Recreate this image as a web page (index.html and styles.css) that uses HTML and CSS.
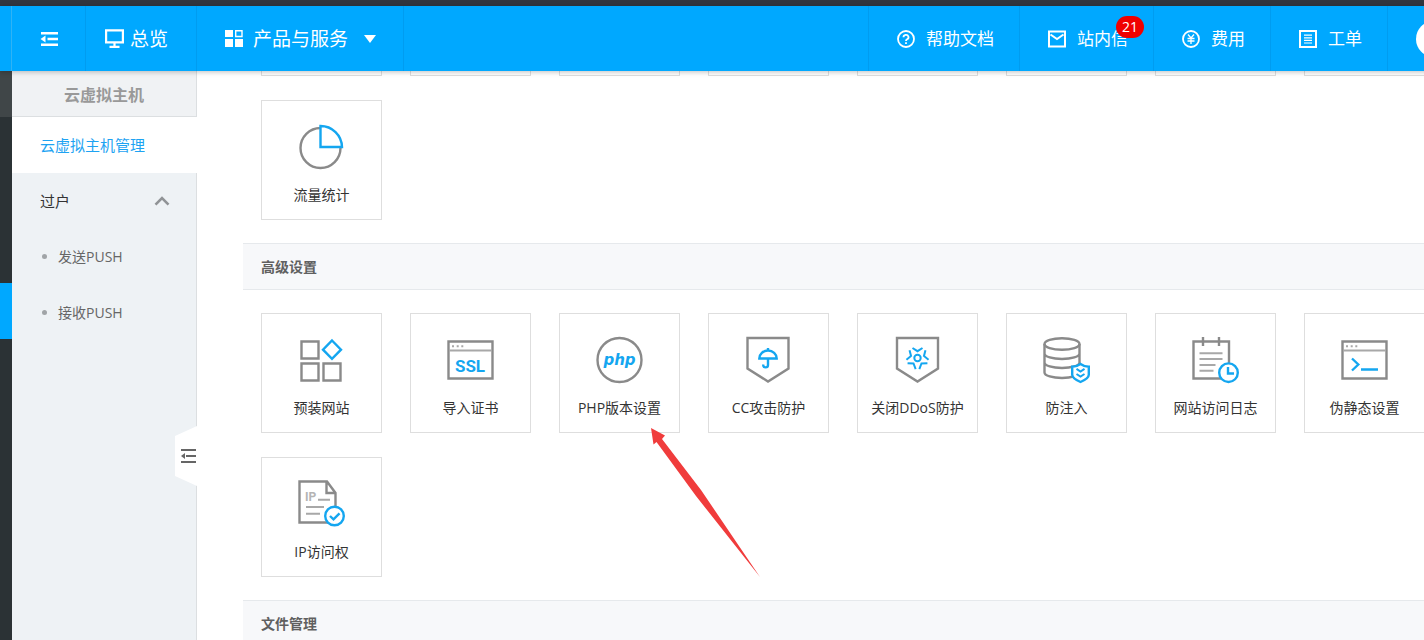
FILE: index.html
```html
<!DOCTYPE html>
<html lang="zh-CN">
<head>
<meta charset="utf-8">
<title>云虚拟主机管理</title>
<link rel="stylesheet" href="styles.css">
</head>
<body>
<div class="page">
  <div class="strip"></div>
  <header class="topbar">
    <div class="topbar-edge"></div>
    <button class="nav-item nav-toggle" type="button" aria-label="收起菜单">
      <svg width="18" height="14" viewBox="0 0 18 14" fill="none" stroke="currentColor" stroke-width="2.400"><path d="M1 1.200h17M7.500 7h10.500M1 12.800h17"/><path d="M5.500 3.500v7L0.500 7z" fill="currentColor" stroke="none"/></svg>
    </button>
    <a class="nav-item nav-home" href="#">
      <svg width="19" height="19" viewBox="0 0 19 19" fill="none" stroke="currentColor" stroke-width="2.200"><path d="M1.100 1.300h16.800v12H1.100zM9.500 14v4M4.500 17.800h10"/></svg>
      <span>总览</span>
    </a>
    <button class="nav-item nav-products" type="button">
      <svg width="18" height="17" viewBox="0 0 18 17" fill="currentColor"><path d="M0 0h8v7H0zM0 9h8v8H0zM10 9h8v8h-8z"/><path d="M10.700.700h6.300v5.800h-6.300z" fill="none" stroke="currentColor" stroke-width="1.400"/></svg>
      <span>产品与服务</span>
      <svg class="caret" width="12" height="8" viewBox="0 0 12 8" fill="currentColor"><path d="M0 0h12L6 8z"/></svg>
    </button>
    <nav class="topbar-right" aria-label="工具">
      <a class="tool" href="#">
        <svg width="18" height="18" viewBox="0 0 18 18" fill="none" stroke="currentColor" stroke-width="1.800"><circle cx="9" cy="9" r="8"/><path d="M6.500 7.200a2.500 2.300 0 1 1 3.600 2q-1.100.600-1.100 1.900M9 12.300v1.700"/></svg>
        <span>帮助文档</span>
      </a>
      <a class="tool" href="#">
        <svg width="18" height="18" viewBox="0 0 18 18" fill="none" stroke="currentColor" stroke-width="2"><path d="M1 1.500h16v15H1z"/><path d="M2.500 4.500l6.500 4.500 6.500-4.500"/></svg>
        <span>站内信</span>
        <span class="badge">21</span>
      </a>
      <a class="tool" href="#">
        <svg width="18" height="18" viewBox="0 0 18 18" fill="none" stroke="currentColor" stroke-width="1.800"><circle cx="9" cy="9" r="8"/><path d="M6 4.500l3 3.500 3-3.500M9 8v6M5.500 8.500h7M5.500 11h7" stroke-width="1.300"/></svg>
        <span>费用</span>
      </a>
      <a class="tool" href="#">
        <svg width="18" height="18" viewBox="0 0 18 18" fill="none" stroke="currentColor" stroke-width="2"><path d="M1 1h16v16H1z"/><path d="M5 5.200h8M5 7.800h8M5 10.400h8M5 13h8" stroke-width="1.200"/></svg>
        <span>工单</span>
      </a>
      <a class="account" href="#" aria-label="账号"><span class="avatar"></span></a>
    </nav>
  </header>

  <div class="layout">
    <div class="rail"><div class="rail-head"></div><div class="rail-gap"></div><div class="rail-active"></div></div>

    <aside class="sidebar">
      <h1 class="side-title">云虚拟主机</h1>
      <a class="side-item side-current" href="#">云虚拟主机管理</a>
      <button class="side-item side-group" type="button">过户
        <svg width="16" height="10" viewBox="0 0 16 10" fill="none" stroke="currentColor" stroke-width="2.600"><path d="M1.500 8.700L8 2l6.500 6.700"/></svg>
      </button>
      <a class="side-item side-sub" href="#">发送PUSH</a>
      <a class="side-item side-sub" href="#">接收PUSH</a>
      <button class="collapse" type="button" aria-label="收起侧栏">
        <svg width="15" height="14" viewBox="0 0 15 14" fill="none" stroke="currentColor" stroke-width="2"><path d="M0 1h15M5 7h10M0 13h15"/><path d="M4 4v6L0 7z" fill="currentColor" stroke="none"/></svg>
      </button>
    </aside>

    <main class="content">
      <div class="tiles peek"><i></i><i></i><i></i><i></i><i></i><i></i><i></i><i></i></div>
      <div class="tiles">
        <a class="tile" href="#">
          <svg class="icon" viewBox="0 0 49 48"><circle cx="23.500" cy="25" r="20"/><path class="blue paper" d="M23.500 3A21.500 21.500 0 0 1 45 24H23.500z"/></svg>
          <span>流量统计</span>
        </a>
      </div>

      <h2 class="section">高级设置</h2>
      <div class="tiles">
        <a class="tile" href="#">
          <svg class="icon" viewBox="0 0 49 48"><path d="M4.500 5.500h17v17h-17zM4.500 27.500h17v17h-17zM26.500 27.500h17v17h-17z"/><path class="blue" d="M35 4.500l9 9.200-9 9.200-9-9.200z"/></svg>
          <span>预装网站</span>
        </a>
        <a class="tile" href="#">
          <svg class="icon" viewBox="0 0 49 48"><path d="M2.500 5.500h44v37h-44z"/><path class="thin" d="M3 14.500h43"/><path class="thin" d="M6 10.300h2M10.700 10.300h2M15.300 10.300h2"/><text class="ssl" x="24" y="36">SSL</text></svg>
          <span>导入证书</span>
        </a>
        <a class="tile" href="#">
          <svg class="icon" viewBox="0 0 49 48"><circle cx="24.500" cy="24" r="22"/><text class="php" x="24.500" y="29">php</text></svg>
          <span>PHP版本设置</span>
        </a>
        <a class="tile" href="#">
          <svg class="icon" viewBox="0 0 49 48"><path d="M3.500 2h41v30.500L24 45.500 3.500 32.500z"/><path class="blue" d="M15.300 22.500a8.700 8 0 0 1 17.400 0zM24 12v3M24 22.500v6.500a2.400 2.400 0 0 1-4.800 0v-.500"/></svg>
          <span>CC攻击防护</span>
        </a>
        <a class="tile" href="#">
          <svg class="icon" viewBox="0 0 49 48"><path d="M4 2h41v30.500L24.500 45.500 4 32.500z"/><g class="blue rays"><circle cx="24.500" cy="22" r="3.200"/><path id="ray" d="M19.500 12l5 3.200 5-3.200"/><use href="#ray" transform="rotate(72 24.500 22)"/><use href="#ray" transform="rotate(144 24.500 22)"/><use href="#ray" transform="rotate(216 24.500 22)"/><use href="#ray" transform="rotate(288 24.500 22)"/></g></svg>
          <span>关闭DDoS防护</span>
        </a>
        <a class="tile" href="#">
          <svg class="icon" viewBox="0 0 49 48"><ellipse cx="20" cy="8" rx="17.500" ry="5.800"/><path d="M2.500 8v28.500c0 3.200 8 5.500 17.500 5.500s17.500-2.300 17.500-5.500V8M2.500 17.500c0 3.200 8 5.500 17.500 5.500s17.500-2.300 17.500-5.500M2.500 26.500c0 3.200 8 5.500 17.500 5.500s17.500-2.300 17.500-5.500"/><path class="blue paper" d="M38.500 28q4 2.800 8.300 2.800v8q0 3.600-8.300 7.200-8.300-3.600-8.300-7.200v-8q4.300 0 8.300-2.800z"/><path class="blue rays" d="M34.500 32.800l4 2.700 4-2.700M34.500 38l4 2.500 4-2.500"/></svg>
          <span>防注入</span>
        </a>
        <a class="tile" href="#">
          <svg class="icon" viewBox="0 0 49 48"><path d="M2.500 5.500H38v37H2.500z"/><path d="M12 1v9M28 1v9"/><path class="thin" d="M8.500 17.300h23M8.500 23h23M8.500 29h16M8.500 34.700h14"/><circle class="blue paper" cx="37.500" cy="36.700" r="9.300"/><path class="blue" d="M37 31v6.500h6"/></svg>
          <span>网站访问日志</span>
        </a>
        <a class="tile" href="#">
          <svg class="icon" viewBox="0 0 49 48"><path d="M2.500 5.500h44v37h-44z"/><path class="thin" d="M3 14.500h43"/><path class="thin" d="M6 10.300h2M10.700 10.300h2M15.300 10.300h2"/><path class="blue" d="M12 22.500l6.300 6-6.300 6M21 33.500h17"/></svg>
          <span>伪静态设置</span>
        </a>
        <a class="tile" href="#">
          <svg class="icon" viewBox="0 0 49 48"><path d="M2.500 1.500H30L38.500 13v29.500h-36zM29.500 2v11H38"/><text class="ip" x="8" y="21">IP</text><path class="thin" d="M21 19.700h12M9 27h18M9 33.700h14"/><circle class="blue paper" cx="37.500" cy="36" r="9.300"/><path class="blue" d="M33 36l3.500 3.300 6-6"/></svg>
          <span>IP访问权</span>
        </a>
      </div>

      <h2 class="section">文件管理</h2>
    </main>
  </div>

  <svg class="pointer" width="110" height="150" viewBox="0 0 110 150" aria-hidden="true"><path d="M1 1L15 8.500 12 12 51 63 110 150 46 69 6.500 15 3.500 17.500z"/></svg>
</div>
</body>
</html>
```

FILE: styles.css
```css
* { box-sizing: border-box; }

body {
  margin: 0;
  overflow: hidden;
  background: #fff;
  color: #333;
  font: 14px/20px "Open Sans", "Noto Sans CJK SC", sans-serif;
}

a { color: inherit; text-decoration: none; }

button {
  padding: 0;
  border: 0;
  background: none;
  color: inherit;
  font: inherit;
  cursor: pointer;
}

svg { display: block; flex: none; }

.page {
  position: relative;
  display: flex;
  flex-direction: column;
  min-width: 1480px;
  height: 100vh;
  overflow: hidden;
}

.strip { flex: none; height: 6px; background: #32363f; }

/* Top bar */
.topbar {
  position: relative;
  z-index: 2;
  display: flex;
  flex: none;
  height: 65px;
  background: #00a8ff;
  color: #fff;
  box-shadow: 0 1px 5px rgba(0, 0, 0, .25);
}

.topbar-edge { width: 12px; border-right: 1px solid #2fb3f5; }

.nav-item {
  display: flex;
  align-items: center;
  border-right: 1px solid #009cf0;
  font-size: 19px;
  line-height: 28px;
}

.nav-toggle { justify-content: center; width: 74px; }
.nav-home { gap: 6px; padding: 0 28px 0 19px; }
.nav-products { gap: 10px; padding: 0 27px 0 28px; }
.caret { margin-left: 6px; }

.topbar-right {
  display: flex;
  margin-left: auto;
  border-left: 1px solid #009cf0;
}

.tool {
  position: relative;
  display: flex;
  align-items: center;
  gap: 11px;
  padding: 0 25px 0 28px;
  border-right: 1px solid #009cf0;
  font-size: 17px;
  line-height: 24px;
}

.badge {
  position: absolute;
  top: 10px;
  right: 9px;
  padding: 0 6px;
  border-radius: 11px;
  background: #f00000;
  font-size: 14px;
  line-height: 22px;
}

.account { display: flex; align-items: center; padding: 0 28px; }
.avatar { width: 36px; height: 36px; border-radius: 50%; background: #fff; }

/* Columns */
.layout { display: flex; flex: 1; min-height: 0; }

.rail { flex: none; width: 12px; background: #2b3235; }
.rail-head { height: 46px; background: #404648; }
.rail-gap { height: 166px; }
.rail-active { height: 56px; background: #00a8ff; }

.sidebar {
  position: relative;
  flex: none;
  width: 185px;
  border-right: 1px solid #dcdfe1;
  background: #eef2f5;
}

.side-title {
  margin: 0;
  border-bottom: 1px solid #dcdfe1;
  background: #f0f2f4;
  color: #999;
  font-size: 16px;
  line-height: 48px;
  height: 46px;
  text-align: center;
}

.side-item {
  display: flex;
  align-items: center;
  width: 100%;
  height: 56px;
  padding: 0 28px 1px;
  font-size: 15px;
}

.side-current { width: 185px; background: #fff; color: #1ea3f2; }
.side-group { justify-content: space-between; padding-right: 26px; }
.side-group svg { color: #909396; }
.side-sub { gap: 11px; padding-left: 30px; color: #666; font-size: 14px; }
.side-sub::before { content: ""; width: 5px; height: 5px; border-radius: 50%; background: #a0a4a7; }

.collapse {
  position: absolute;
  top: 355px;
  right: -1px;
  display: flex;
  align-items: center;
  justify-content: flex-end;
  width: 22px;
  height: 60px;
  padding-right: 1px;
  background: #fff;
  color: #666;
  clip-path: polygon(0 10px, 100% 0, 100% 100%, 0 50px);
}

/* Content */
.content { flex: 1; min-width: 0; padding-left: 46px; }

.tiles {
  display: grid;
  grid-template-columns: repeat(auto-fill, 121px);
  gap: 24px 28px;
  padding-left: 18px;
}

.peek { margin-bottom: 24px; }
.peek i { height: 5px; border: 1px solid #dedede; border-top: 0; }

.tile {
  display: flex;
  flex-direction: column;
  align-items: center;
  gap: 14px;
  height: 120px;
  padding-top: 22px;
  border: 1px solid #dedede;
  white-space: nowrap;
}

.section {
  margin: 23px 0;
  padding: 0 18px;
  border: 1px solid #e6e9ec;
  border-width: 1px 0;
  background: #f7f8fa;
  color: #606060;
  font-size: 14px;
  font-weight: 600;
  line-height: 45px;
}

/* Tile icons */
.icon { width: 49px; height: 48px; fill: none; stroke: #8a8a8a; stroke-width: 2.4; }
.icon .thin { stroke: #a8a8a8; stroke-width: 2; }
.icon .blue { stroke: #14a6f0; stroke-width: 2.4; }
.icon .rays { stroke-width: 2; }
.icon .paper { fill: #fff; }
.icon text { stroke: none; fill: #14a6f0; font-weight: 700; }
.icon .ssl { font-family: Roboto, sans-serif; font-size: 17px; text-anchor: middle; }
.icon .php { font-family: "DejaVu Sans", sans-serif; font-size: 15px; font-style: italic; text-anchor: middle; }
.icon .ip { fill: #b4b4b4; font-family: Roboto, sans-serif; font-size: 12px; }

.pointer {
  position: absolute;
  top: 427px;
  left: 650px;
  z-index: 3;
  fill: #f03c3c;
  pointer-events: none;
}
```
